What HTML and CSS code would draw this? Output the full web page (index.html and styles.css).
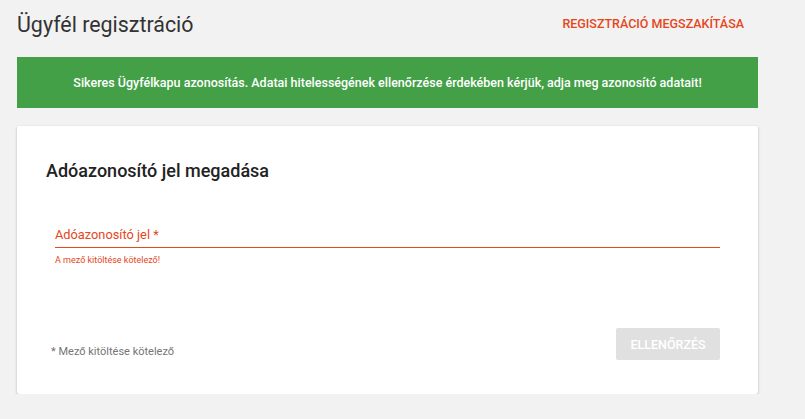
FILE: index.html
```html
<!DOCTYPE html>
<html lang="hu">
<head>
<meta charset="utf-8">
<title>Ügyfél regisztráció</title>
<link rel="stylesheet" href="styles.css">
</head>
<body>
<div class="page">
  <header class="header">
    <h1 class="title">Ügyfél regisztráció</h1>
    <a class="cancel" href="#">REGISZTRÁCIÓ MEGSZAKÍTÁSA</a>
  </header>
  <div class="banner">Sikeres Ügyfélkapu azonosítás. Adatai hitelességének ellenőrzése érdekében kérjük, adja meg azonosító adatait!</div>
  <section class="card">
    <h2 class="card-title">Adóazonosító jel megadása</h2>
    <div class="field">
      <label class="field-label">Adóazonosító jel *</label>
      <div class="field-line"></div>
      <div class="field-error">A mező kitöltése kötelező!</div>
    </div>
    <div class="card-footer">
      <span class="required-note">* Mező kitöltése kötelező</span>
      <button class="btn" disabled>ELLENŐRZÉS</button>
    </div>
  </section>
</div>
</body>
</html>
```
FILE: styles.css
```css
html, body {
  margin: 0;
  padding: 0;
  background: #f2f2f2;
  font-family: Roboto, "Liberation Sans", Arial, sans-serif;
}
.page {
  width: 741px;
  margin-left: 17px;
  padding-top: 11px;
}
.header {
  display: flex;
  justify-content: space-between;
  align-items: flex-start;
  margin-bottom: 19px;
}
.title {
  margin: 0;
  font-size: 21.4px;
  line-height: 27px;
  font-weight: 400;
  color: #333;
}
.cancel {
  margin-top: 5px;
  margin-right: 14px;
  font-size: 12.5px;
  line-height: 16px;
  font-weight: 500;
  color: #e5461a;
  text-decoration: none;
}
.banner {
  height: 51px;
  display: flex;
  align-items: center;
  justify-content: center;
  background: #43a047;
  color: #fff;
  font-size: 12.5px;
  font-weight: 500;
}
.card {
  margin-top: 18px;
  height: 268px;
  box-sizing: border-box;
  background: #fff;
  border-radius: 2px;
  box-shadow: 0 1px 3px rgba(0,0,0,0.22), 0 1px 1px rgba(0,0,0,0.12);
  padding: 33px 38px 0 29px;
  display: flex;
  flex-direction: column;
}
.card-title {
  margin: 0;
  font-size: 18px;
  line-height: 24px;
  font-weight: 500;
  color: #222;
}
.field {
  margin-top: 44px;
  margin-left: 9px;
}
.field-label {
  display: block;
  font-size: 12.8px;
  line-height: 16px;
  color: #e5461a;
}
.field-line {
  margin-top: 4px;
  height: 1px;
  background: #e5461a;
}
.field-error {
  margin-top: 6px;
  font-size: 9px;
  line-height: 12px;
  color: #e5461a;
}
.card-footer {
  margin-top: 62px;
  display: flex;
  justify-content: space-between;
  align-items: flex-start;
}
.required-note {
  margin-left: 5px;
  margin-top: 17px;
  font-size: 11px;
  line-height: 14px;
  color: #757575;
}
.btn {
  width: 104px;
  height: 32px;
  border: none;
  border-radius: 2px;
  background: #e0e0e0;
  color: #fff;
  font-family: inherit;
  font-size: 12.5px;
  font-weight: 500;
  padding: 0;
}
```
